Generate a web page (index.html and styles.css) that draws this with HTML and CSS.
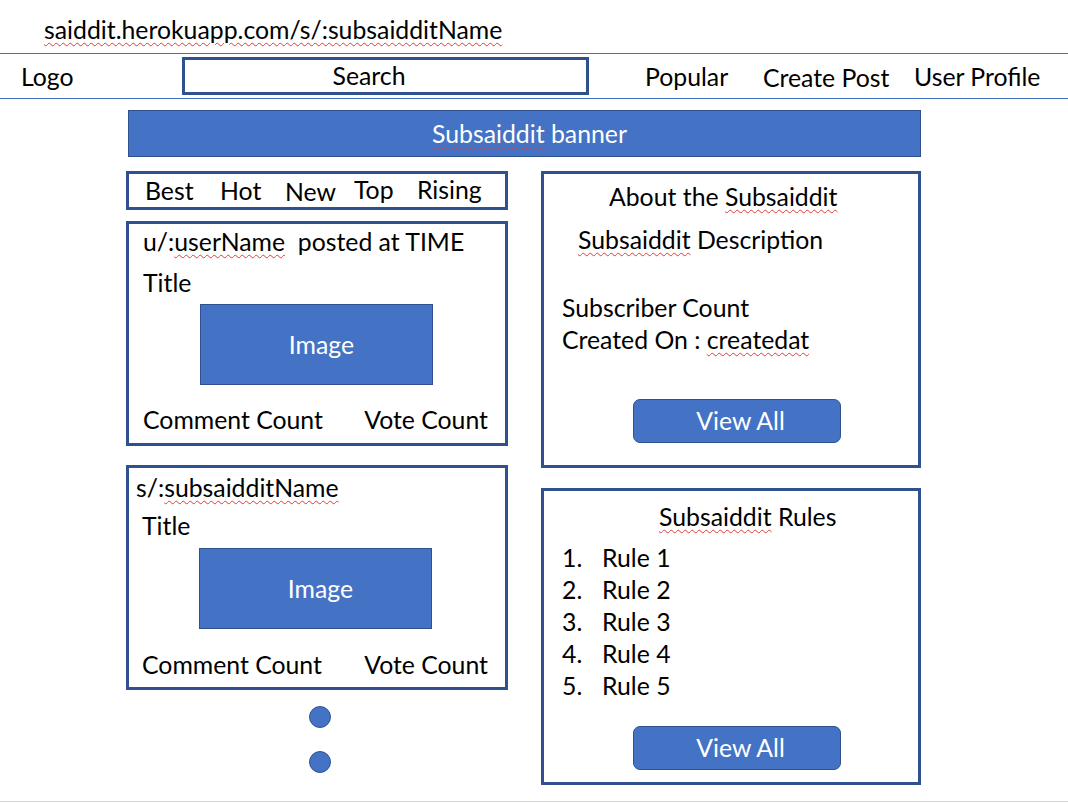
FILE: index.html
```html
<!DOCTYPE html>
<html>
<head>
<meta charset="utf-8">
<link rel="stylesheet" href="styles.css">
</head>
<body>
<div class="url"><span class="sq">saiddit.herokuapp.com/s/:subsaidditName</span></div>
<nav class="nav">
  <div class="logo">Logo</div>
  <div class="search">Search</div>
  <div class="links">
    <span class="popular">Popular</span>
    <span class="create">Create Post</span>
    <span class="profile">User Profile</span>
  </div>
</nav>
<main class="main">
  <div class="banner"><span class="sq">Subsaiddit</span> banner</div>
  <div class="cols">
    <div class="left">
      <div class="tabs">
        <span class="t-best">Best</span>
        <span class="t-hot">Hot</span>
        <span class="t-new">New</span>
        <span class="t-top">Top</span>
        <span class="t-rising">Rising</span>
      </div>
      <div class="card card1">
        <div class="meta">u/:<span class="sq">userName</span>&nbsp; posted at TIME</div>
        <div class="title">Title</div>
        <div class="image">Image</div>
        <div class="counts"><span>Comment Count</span><span>Vote Count</span></div>
      </div>
      <div class="card card2">
        <div class="meta meta2">s/:<span class="sq">subsaidditName</span></div>
        <div class="title">Title</div>
        <div class="image">Image</div>
        <div class="counts"><span>Comment Count</span><span>Vote Count</span></div>
      </div>
      <div class="dots"><span class="dot"></span><span class="dot"></span></div>
    </div>
    <div class="right">
      <div class="box about">
        <div class="about-title">About the <span class="sq">Subsaiddit</span></div>
        <div class="desc"><span class="sq">Subsaiddit</span> Description</div>
        <div class="stats">
          <div>Subscriber Count</div>
          <div>Created On : <span class="sq">createdat</span></div>
        </div>
        <div class="btn">View All</div>
      </div>
      <div class="box rules">
        <div class="rules-title"><span class="sq">Subsaiddit</span> Rules</div>
        <ol class="rule-list">
          <li><span class="num">1.</span>Rule 1</li>
          <li><span class="num">2.</span>Rule 2</li>
          <li><span class="num">3.</span>Rule 3</li>
          <li><span class="num">4.</span>Rule 4</li>
          <li><span class="num">5.</span>Rule 5</li>
        </ol>
        <div class="btn">View All</div>
      </div>
    </div>
  </div>
</main>
<div class="bottom-line"></div>
</body>
</html>
```

FILE: styles.css
```css
* { box-sizing: border-box; }
html, body { margin: 0; padding: 0; background: #fff; }
body {
  font-family: "Lato", "Open Sans", sans-serif;
  font-size: 24.8px;
  color: #000;
  width: 1068px;
  height: 803px;
  overflow: hidden;
  position: relative;
}
.sq {
  text-decoration: underline wavy #e23b3b;
  text-decoration-thickness: 1px;
  text-underline-offset: 3px;
}
.url {
  height: 53px;
  padding-left: 44px;
  padding-top: 16px;
  line-height: 28px;
}
.nav {
  height: 46px;
  border-top: 1px solid #4472c4;
  border-bottom: 1px solid #4472c4;
  display: flex;
  align-items: center;
  position: relative;
}
.logo { margin-left: 21px; width: 161px; }
.search {
  width: 407px;
  height: 38px;
  border: 3px solid #2f528f;
  text-align: center;
  line-height: 31px;
  padding-right: 33px;
}
.links { display: flex; margin-left: 56px; align-items: center; }
.popular { width: 118px; margin-top: 1px; }
.create { width: 151px; margin-top: 3px; }
.profile { margin-top: 0; }
.main {
  margin-left: 126px;
  width: 795px;
  padding-top: 11px;
}
.banner {
  margin-left: 2px;
  width: 793px;
  height: 47px;
  background: #4472c4;
  border: 1px solid #2f528f;
  color: #fff;
  text-align: center;
  line-height: 45px;
  padding-left: 10px;
}
.cols {
  display: flex;
  gap: 33px;
  margin-top: 14px;
}
.left { width: 382px; display: flex; flex-direction: column; }
.right { width: 380px; display: flex; flex-direction: column; gap: 20px; }
.tabs {
  height: 39px;
  border: 3px solid #2f528f;
  display: flex;
  align-items: center;
  padding-left: 16px;
}
.tabs span { display: inline-block; }
.t-best { width: 75px; }
.t-hot { width: 65px; }
.t-new { width: 69px; margin-top: 1px; }
.t-top { width: 63px; margin-top: -3px; }
.t-rising { margin-top: -3px; }
.card {
  width: 382px;
  height: 225px;
  border: 3px solid #2f528f;
  padding: 0 17px 0 14px;
  display: flex;
  flex-direction: column;
}
.card1 { margin-top: 11px; }
.card2 { margin-top: 19px; }
.meta { margin-top: 4px; line-height: 28px; }
.meta2 { margin-left: -7px; margin-top: 6px; }
.title { margin-top: 13px; line-height: 28px; }
.card2 .title { margin-top: 10px; margin-left: -1px; }
.image {
  margin-left: 57px;
  width: 233px;
  height: 81px;
  margin-top: 7px;
  background: #4472c4;
  border: 1px solid #2f528f;
  color: #fff;
  text-align: center;
  line-height: 79px;
  padding-left: 10px;
}
.card2 .image { margin-top: 8px; margin-left: 56px; }
.counts {
  margin-top: 21px;
  display: flex;
  justify-content: space-between;
  line-height: 28px;
}
.card2 .counts { margin-top: 22px; margin-left: -1px; }
.dots {
  display: flex;
  flex-direction: column;
  align-items: center;
  gap: 23px;
  margin-top: 16px;
  margin-left: 6px;
}
.dot {
  width: 22px;
  height: 22px;
  border-radius: 50%;
  background: #4472c4;
  border: 1px solid #2f528f;
}
.box {
  height: 297px;
  border: 3px solid #2f528f;
  display: flex;
  flex-direction: column;
  padding-left: 18px;
}
.about-title { margin-top: 9px; margin-left: 47px; line-height: 28px; }
.desc { margin-top: 15px; margin-left: 16px; line-height: 28px; }
.stats { margin-top: 38px; line-height: 32px; }
.btn {
  margin-left: 71px;
  width: 208px;
  height: 44px;
  border-radius: 7px;
  background: #4472c4;
  border: 1px solid #2f528f;
  color: #fff;
  text-align: center;
  line-height: 42px;
  padding-left: 7px;
}
.about .btn { margin-top: 43px; }
.rules-title { margin-top: 12px; margin-left: 97px; line-height: 28px; }
.rule-list {
  list-style: none;
  margin: 11px 0 0 0;
  padding: 0;
}
.rule-list li { line-height: 32px; height: 32px; }
.num { display: inline-block; width: 40px; }
.rules .btn { margin-top: 24px; }
.bottom-line {
  position: absolute;
  left: 0;
  top: 801px;
  width: 1068px;
  height: 1px;
  background: #d6d6d6;
}
```
